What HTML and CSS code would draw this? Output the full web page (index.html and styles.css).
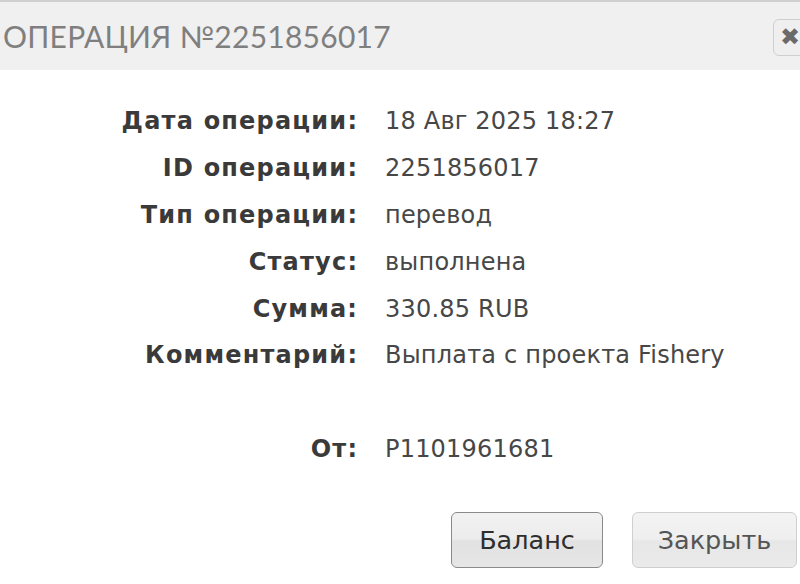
FILE: index.html
```html
<!DOCTYPE html>
<html lang="ru">
<head>
<meta charset="utf-8">
<title>Операция</title>
<link rel="stylesheet" href="styles.css">
</head>
<body>
<div class="dialog">
  <div class="header">
    <div class="title">ОПЕРАЦИЯ №2251856017</div>
    <button class="close" type="button">✖</button>
  </div>
  <div class="content">
    <div class="details">
      <div class="label">Дата операции:</div><div class="value">18 Авг 2025 18:27</div>
      <div class="label">ID операции:</div><div class="value">2251856017</div>
      <div class="label">Тип операции:</div><div class="value">перевод</div>
      <div class="label">Статус:</div><div class="value">выполнена</div>
      <div class="label">Сумма:</div><div class="value">330.85 RUB</div>
      <div class="label">Комментарий:</div><div class="value">Выплата с проекта Fishery</div>
      <div class="label spacer"></div><div class="value spacer"></div>
      <div class="label">От:</div><div class="value">P1101961681</div>
    </div>
    <div class="buttons">
      <button class="btn btn-primary" type="button">Баланс</button>
      <button class="btn btn-secondary" type="button">Закрыть</button>
    </div>
  </div>
</div>
</body>
</html>
```
FILE: styles.css
```css
html, body {
  margin: 0;
  padding: 0;
  background: #ffffff;
}
.dialog {
  width: 800px;
  height: 584px;
  overflow: hidden;
}
.header {
  display: flex;
  align-items: center;
  justify-content: space-between;
  height: 68px;
  background: #f0f0f0;
  border-top: 2px solid #cfcfcf;
}
.title {
  font-family: "Lato", sans-serif;
  font-size: 30px;
  letter-spacing: 0.25px;
  color: #7f7f7f;
  padding-left: 3px;
  white-space: nowrap;
}
.close {
  width: 40px;
  height: 37px;
  margin-right: -13px;
  margin-top: 2px;
  border: 1px solid #cfcfcf;
  border-radius: 6px;
  background: #efefef;
  color: #6a6a6a;
  font-family: "DejaVu Sans", sans-serif;
  font-size: 24px;
  line-height: 1;
  padding: 0 0 0 6px;
  text-align: left;
  overflow: hidden;
}
.content {
  padding-top: 28px;
}
.details {
  display: grid;
  grid-template-columns: 357px 1fr;
  column-gap: 28px;
  grid-auto-rows: 46.8px;
  align-items: center;
}
.label {
  text-align: right;
  font-family: "DejaVu Sans", sans-serif;
  font-weight: bold;
  font-size: 24px;
  letter-spacing: 1.2px;
  color: #3a3a3a;
  white-space: nowrap;
}
.label::after {
  content: "";
  margin-right: -1.2px;
}
.value {
  font-family: "DejaVu Sans", sans-serif;
  font-size: 24px;
  letter-spacing: 0.2px;
  color: #474747;
  white-space: nowrap;
}
.buttons {
  display: flex;
  justify-content: flex-end;
  gap: 29px;
  padding-right: 3px;
  margin-top: 40px;
}
.btn {
  height: 56px;
  border-radius: 6px;
  font-family: "DejaVu Sans", sans-serif;
  font-size: 25.5px;
  padding: 0;
  background: linear-gradient(#f2f2f2 0%, #ececec 48%, #e2e2e2 52%, #e6e6e6 100%);
}
.btn-primary {
  width: 152px;
  border: 1px solid #8a8a8a;
  color: #2e2e2e;
}
.btn-secondary {
  width: 165px;
  border: 1px solid #cfcfcf;
  color: #555555;
  background: linear-gradient(#f3f3f3 0%, #efefef 48%, #e7e7e7 52%, #eaeaea 100%);
}
```
